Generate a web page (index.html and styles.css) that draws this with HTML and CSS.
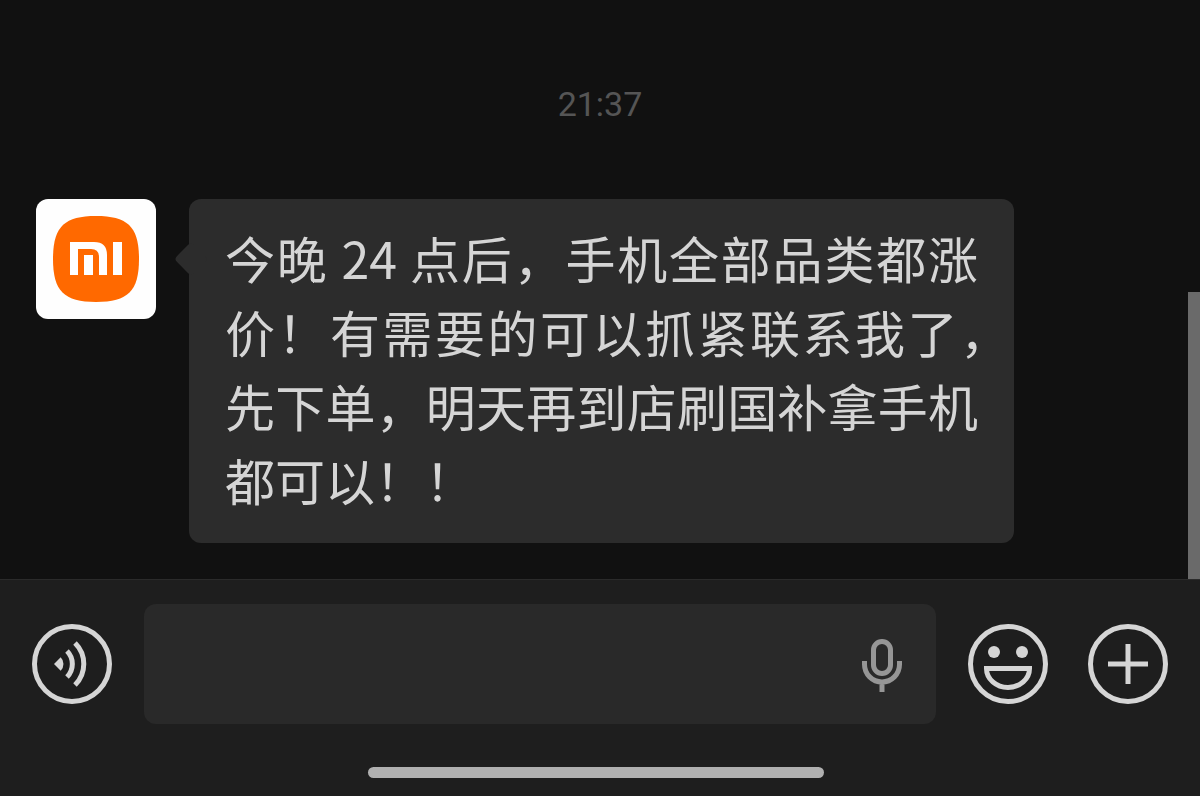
FILE: index.html
```html
<!DOCTYPE html>
<html lang="zh-CN">
<head>
    <meta charset="UTF-8">
    <meta name="viewport" content="width=device-width, initial-scale=1">
    <title>聊天</title>
    <link rel="stylesheet" href="styles.css">
</head>
<body>
    <main class="chat">
        <time class="time" datetime="21:37">21:37</time>
        <div class="message">
            <svg class="avatar" viewBox="0 0 120 120" aria-hidden="true">
                <rect width="120" height="120" fill="#fefefe"/>
                <path d="M60 17C92 17 103 28 103 60S92 103 60 103 17 92 17 60 28 17 60 17Z" fill="#ff6900"/>
                <path d="M34 43H58Q71 43 71 56V76H63V58Q63 50 55 50H42V76H34ZM48 56H57V76H48ZM77 43H86V76H77Z" fill="#fff"/>
            </svg>
            <div class="bubble">
                <p class="text">今晚 24 点后，手机全部品类都涨价！有需要的可以抓紧联系我了<span class="hang">，</span>先下单，明天再到店刷国补拿手机都可以！！</p>
            </div>
        </div>
        <div class="scroll-thumb"></div>
    </main>
    <footer class="composer">
        <form class="bar">
            <button class="icon-btn" type="button" aria-label="语音">
                <svg viewBox="0 0 80 80">
                    <circle class="line" cx="40" cy="40" r="37.5"/>
                    <path class="solid" d="M22 40L28.700 33.300A9.500 9.500 0 0 1 28.700 46.700Z"/>
                    <path class="line" d="M35 27A18.500 18.500 0 0 1 35 53M43 19A29.500 29.500 0 0 1 43 61"/>
                </svg>
            </button>
            <div class="field">
                <input class="input" type="text" aria-label="消息">
                <button class="mic" type="button" aria-label="语音输入">
                    <svg viewBox="0 0 40 54">
                        <rect x="11.500" y="3.500" width="17" height="32" rx="8.500"/>
                        <path d="M2.500 23V26.500A17.500 17.500 0 0 0 37.500 26.500V23M20 44V54"/>
                    </svg>
                </button>
            </div>
            <div class="actions">
                <button class="icon-btn" type="button" aria-label="表情">
                    <svg viewBox="0 0 80 80">
                        <circle class="line" cx="40" cy="40" r="37.5"/>
                        <circle class="solid" cx="26" cy="28" r="6"/>
                        <circle class="solid" cx="54" cy="28" r="6"/>
                        <path class="line" d="M18.500 44.500H61.500A21.500 19 0 0 1 18.500 44.500Z"/>
                    </svg>
                </button>
                <button class="icon-btn" type="button" aria-label="更多">
                    <svg viewBox="0 0 80 80">
                        <circle class="line" cx="40" cy="40" r="37.5"/>
                        <path class="line" d="M20 40H60M40 20V60"/>
                    </svg>
                </button>
            </div>
        </form>
        <div class="home-bar"></div>
    </footer>
</body>
</html>
```
FILE: styles.css
```css
* {
    box-sizing: border-box;
}
body {
    margin: 0;
    min-height: 100vh;
    display: flex;
    flex-direction: column;
    background-color: #111;
    color: #d5d5d5;
    font-family: "Noto Sans CJK SC", sans-serif;
}
button {
    padding: 0;
    border: none;
    background: none;
    cursor: pointer;
}
svg {
    display: block;
}

/* message list */
.chat {
    position: relative;
    flex: 1;
    padding: 84px 186px 36px 36px;
}
.time {
    display: block;
    margin-right: -150px;
    text-align: center;
    font-family: Roboto, sans-serif;
    font-size: 34px;
    line-height: 40px;
    color: #555;
}
.message {
    display: flex;
    align-items: flex-start;
    gap: 33px;
    margin-top: 75px;
}
.avatar {
    flex: none;
    width: 120px;
    height: 120px;
    border-radius: 12px;
}
.bubble {
    position: relative;
    flex: 1;
    padding: 21px 36px 27px;
    border-radius: 12px;
    background-color: #2c2c2c;
}
.bubble::before {
    content: "";
    position: absolute;
    top: 48px;
    left: -10px;
    width: 24px;
    height: 24px;
    border-radius: 4px;
    background-color: #2c2c2c;
    transform: rotate(45deg);
}
.text {
    position: relative;
    margin: 0;
    font-size: 50px;
    line-height: 74px;
    text-align: justify;
}
/* the empty half of the comma hangs in the padding */
.hang {
    margin-right: -32px;
}
.scroll-thumb {
    position: absolute;
    right: 0;
    bottom: 0;
    width: 12px;
    height: 287px;
    background-color: #6a6a6a;
}

/* input bar */
.composer {
    padding: 24px 32px 18px;
    border-top: 1px solid #2b2b2b;
    background-color: #1e1e1e;
}
.bar {
    display: flex;
    align-items: center;
    gap: 32px;
}
.actions {
    display: flex;
    gap: 40px;
}
.icon-btn {
    flex: none;
    width: 80px;
    height: 80px;
}
.line {
    fill: none;
    stroke: #d5d5d5;
    stroke-width: 5;
}
.solid {
    fill: #d5d5d5;
}
.field {
    flex: 1;
    display: flex;
    align-items: center;
    height: 120px;
    padding: 2px 34px 0 24px;
    border-radius: 12px;
    background-color: #292929;
}
.input {
    flex: 1;
    min-width: 0;
    height: 100%;
    border: none;
    outline: none;
    background: none;
    color: #d5d5d5;
    font-family: inherit;
    font-size: 50px;
}
.mic {
    width: 40px;
    height: 54px;
}
.mic svg {
    fill: none;
    stroke: #969696;
    stroke-width: 5;
}
.home-bar {
    width: 456px;
    max-width: 100%;
    height: 11px;
    margin: 43px 0 0 calc(50% - 232px);
    border-radius: 6px;
    background-color: #b0b0b0;
}
```
